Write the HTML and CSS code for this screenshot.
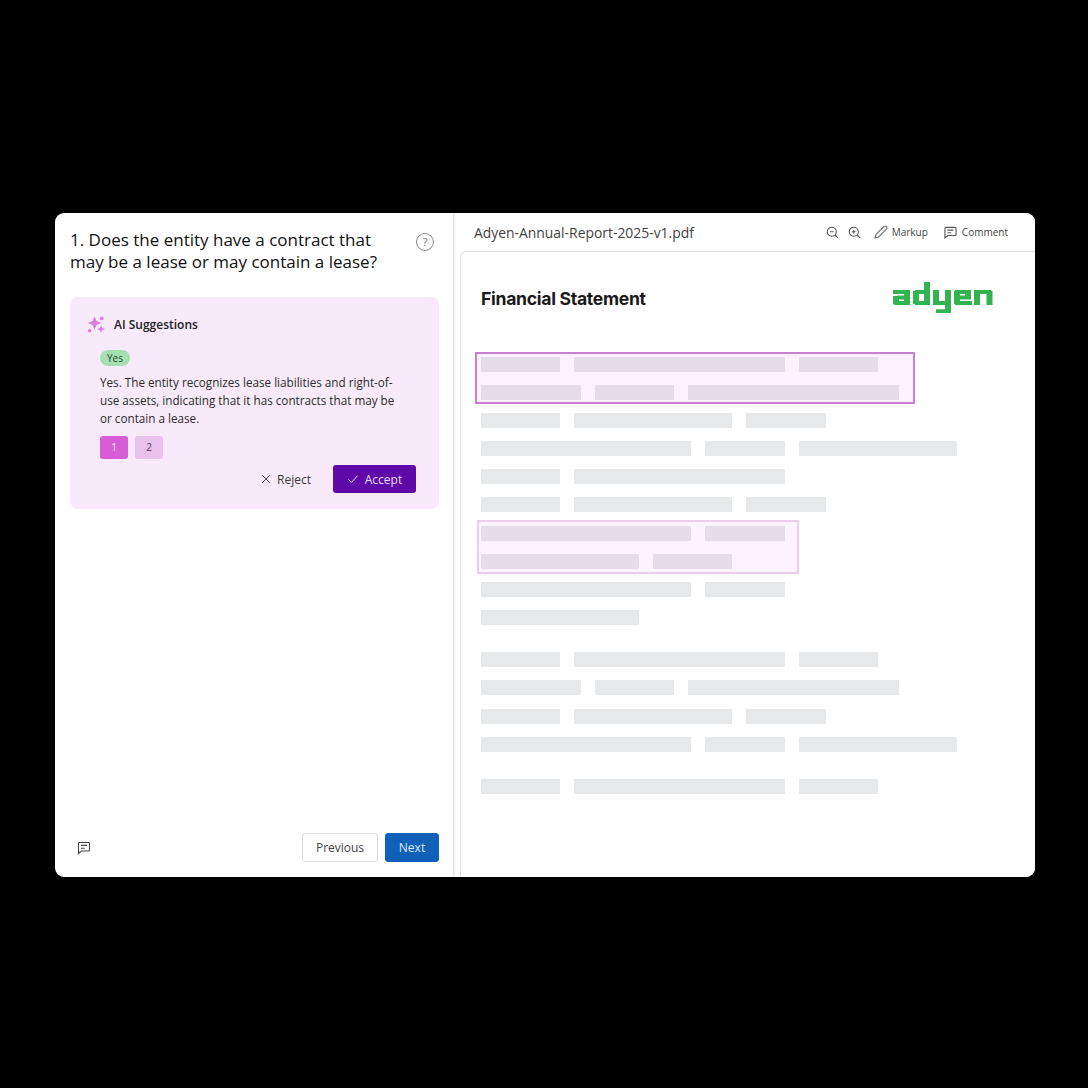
FILE: index.html
```html
<!DOCTYPE html>
<html lang="en">
<head>
<meta charset="utf-8">
<title>Adyen Annual Report review</title>
<link rel="stylesheet" href="styles.css">
</head>
<body>
<main class="window">
  <section class="left">
    <header class="question">
      <h1>1. Does the entity have a contract that may be a lease or may contain a lease?</h1>
      <span class="help">?</span>
    </header>
    <div class="suggest">
      <div class="suggest-head">
        <svg class="spark" viewBox="0 0 20 20" fill="#d77fdc">
          <path d="M8 1.5l2.1 4.9L15 8.5l-4.9 2.1L8 15.5l-2.1-4.9L1 8.5l4.9-2.1z"/>
          <path d="M14.8 10.8l1.2 2.8 3 1.2-3 1.2-1.2 2.8-1.2-2.8-3-1.2 3-1.2z"/>
          <rect x="13.8" y="1.8" width="3.6" height="3.6" rx="1.2"/>
          <circle cx="2.8" cy="16.6" r="1.9"/>
        </svg>
        <span>AI Suggestions</span>
      </div>
      <div class="body">
        <span class="tag">Yes</span>
        <p>Yes. The entity recognizes lease liabilities and right-of-use assets, indicating that it has contracts that may be or contain a lease.</p>
        <div class="refs"><span class="ref on">1</span><span class="ref">2</span></div>
      </div>
      <div class="actions">
        <button class="reject"><svg viewBox="0 0 12 12"><path d="M1.5 1.5l9 9M10.5 1.5l-9 9"/></svg>Reject</button>
        <button class="accept"><svg viewBox="0 0 14 12"><path d="M1.5 6.5l3.6 3.6L12.5 2"/></svg>Accept</button>
      </div>
    </div>
    <footer class="foot">
      <svg class="foot-icon" viewBox="0 0 14 14"><path d="M2.6 1.5h8.8a1.1 1.1 0 0 1 1.1 1.1v6.3a1.1 1.1 0 0 1-1.1 1.1H4.4L1.5 12.6V2.6a1.1 1.1 0 0 1 1.1-1.1zM4 4.4h6M4 7.2h3.6"/></svg>
      <div class="nav">
        <button class="prev">Previous</button>
        <button class="next">Next</button>
      </div>
    </footer>
  </section>
  <section class="right">
    <header class="toolbar">
      <span class="file">Adyen-Annual-Report-2025-v1.pdf</span>
      <div class="tools">
        <svg class="ic zoom-first" viewBox="0 0 14 14"><circle cx="6.2" cy="6.2" r="4.9"/><path d="M9.7 9.7l3.2 3.2M4.2 6.2h4"/></svg>
        <svg class="ic zoom-second" viewBox="0 0 14 14"><circle cx="6.2" cy="6.2" r="4.9"/><path d="M9.7 9.7l3.2 3.2M4.2 6.2h4M6.2 4.2v4"/></svg>
        <span class="tool markup"><svg class="ic pencil" viewBox="0 0 14 14"><path d="M1 13l.9-3.4L10 1.5a1.5 1.5 0 0 1 2.2 0l.3.3a1.5 1.5 0 0 1 0 2.2L4.4 12.1z"/></svg>Markup</span>
        <span class="tool comment"><svg class="ic" viewBox="0 0 14 14"><path d="M2.1 1.5h9.8a1.1 1.1 0 0 1 1.1 1.1v6.6a1.1 1.1 0 0 1-1.1 1.1H4L1 12.8V2.6a1.1 1.1 0 0 1 1.1-1.1zM3.8 4.4h6.4M3.8 7.2h3.8"/></svg>Comment</span>
      </div>
    </header>
    <article class="doc">
      <div class="doc-head">
        <h2>Financial Statement</h2>
        <svg class="logo" viewBox="0 0 100 31" role="img" aria-label="Adyen logo" fill="none" stroke="#33b350">
          <path class="logo-bars" d="M0 10H17M4 15.5H17M2 21H17M22 10H34M22 21H34M43 21H55M43 29.2H55M62 10H78M64 15.5H78M62 21H79M84 10H98"/>
          <path class="logo-stems" d="M14 8v15M3 14v8.5M34 0v23M23 9v13M43 8v15M55 8v23M64 9v13M75 9v8M84 8v15M96.5 9v14"/>
        </svg>
      </div>
      <div class="rows">
        <div class="group">
          <div class="mark strong"></div>
          <div class="row"><i class="w80"></i><i class="w211"></i><i class="w80"></i></div>
          <div class="row"><i class="w100"></i><i class="w80"></i><i class="w211"></i></div>
        </div>
        <div class="row"><i class="w80"></i><i class="w158"></i><i class="w80"></i></div>
        <div class="row"><i class="w211"></i><i class="w80"></i><i class="w158"></i></div>
        <div class="row"><i class="w80"></i><i class="w211"></i></div>
        <div class="row"><i class="w80"></i><i class="w158"></i><i class="w80"></i></div>
        <div class="group">
          <div class="mark soft"></div>
          <div class="row"><i class="w211"></i><i class="w80"></i></div>
          <div class="row"><i class="w158"></i><i class="w80"></i></div>
        </div>
        <div class="row"><i class="w211"></i><i class="w80"></i></div>
        <div class="row"><i class="w158"></i></div>
        <div class="row para"><i class="w80"></i><i class="w211"></i><i class="w80"></i></div>
        <div class="row"><i class="w100"></i><i class="w80"></i><i class="w211"></i></div>
        <div class="row"><i class="w80"></i><i class="w158"></i><i class="w80"></i></div>
        <div class="row"><i class="w211"></i><i class="w80"></i><i class="w158"></i></div>
        <div class="row para"><i class="w80"></i><i class="w211"></i><i class="w80"></i></div>
      </div>
    </article>
  </section>
</main>
</body>
</html>
```
FILE: styles.css
```css
* { box-sizing: border-box; }
html, body { margin: 0; height: 100%; }
body {
  background: #000;
  font-family: "Open Sans", "Noto Sans", sans-serif;
  color: #1f1f1f;
  padding: 213px 53px 211px 55px;
}
.window {
  display: flex;
  height: 664px;
  background: #fff;
  border-radius: 9px;
  overflow: hidden;
}
.left {
  width: 399px;
  flex: none;
  display: flex;
  flex-direction: column;
  padding: 16px 14px 15px 15px;
  border-right: 1px solid #e6e6e6;
}
.question { display: flex; justify-content: space-between; align-items: flex-start; }
h1 { margin: 0; width: 330px; font-size: 17px; line-height: 22px; font-weight: 500; color: #111; }
.help {
  width: 18px; height: 18px; margin: 4px 5px 0 0;
  border: 1.3px solid #8a8a8a; border-radius: 50%;
  font-size: 11px; line-height: 15px; text-align: center; color: #777;
}
.suggest {
  margin-top: 24px;
  height: 212px;
  background: #f8eafa;
  border-radius: 8px;
  padding: 16px 23px 15px 17px;
  display: flex;
  flex-direction: column;
}
.suggest-head { display: flex; align-items: center; gap: 8px; font-size: 12px; font-weight: 600; height: 22px; color: #222; }
.spark { width: 19px; height: 19px; }
.body { padding: 15px 0 0 13px; }
.tag {
  display: block; width: 30px; height: 16px; border-radius: 8px;
  background: #a6dfb2; color: #1d4a2a;
  font-size: 10px; font-weight: 500; line-height: 16px; text-align: center;
}
p { margin: 7px 0 0; width: 300px; font-size: 11.7px; line-height: 18px; color: #2b2b2b; }
.refs { display: flex; gap: 7px; margin-top: 9px; }
.ref {
  width: 28px; height: 23px; border-radius: 3px;
  background: #e9c1ec; color: #5a3a5c;
  font-size: 10px; line-height: 23px; text-align: center;
}
.ref.on { background: #d65cd8; color: #fbe4fb; }
.actions { display: flex; justify-content: flex-end; align-items: center; gap: 22px; margin-top: 6px; }
button { font-family: inherit; font-size: 12px; padding: 0; cursor: pointer; }
.reject, .accept { display: flex; align-items: center; justify-content: center; border: 0; background: none; }
.reject { gap: 6px; color: #3a3a3a; }
.reject svg { width: 10px; height: 10px; fill: none; stroke: #444; stroke-width: 1.2; }
.accept { gap: 6px; width: 83px; height: 28px; border-radius: 3px; background: #5f0aa8; color: #eadcf5; }
.accept svg { width: 12px; height: 10px; fill: none; stroke: #eadcf5; stroke-width: 1.2; }
.foot { margin-top: auto; display: flex; justify-content: space-between; align-items: center; }
.foot-icon { width: 14px; height: 14px; margin-left: 7px; fill: none; stroke: #444; stroke-width: 1.1; }
.nav { display: flex; gap: 7px; }
.prev, .next { height: 29px; border-radius: 3px; line-height: 27px; }
.prev { width: 76px; background: #fff; border: 1px solid #dcdcdc; color: #444; }
.next { width: 54px; background: #1160b7; border: 1px solid #1160b7; color: #dfeaf7; }
.right { flex: 1; min-width: 0; display: flex; flex-direction: column; padding-left: 5px; background: #fff; border-left: 1px solid #f1f1f1; }
.toolbar { height: 38px; flex: none; display: flex; justify-content: space-between; align-items: center; padding: 0 27px 0 14px; }
.file { font-size: 13.9px; color: #3f3f3f; font-weight: 500; }
.tools { display: flex; align-items: center; font-size: 10px; color: #444; }
.ic { width: 13px; height: 13px; fill: none; stroke: #555; stroke-width: 1.2; flex: none; }
.ic.pencil { width: 14px; height: 14px; stroke: #777; }
.zoom-second { margin-left: 9px; }
.tool { display: flex; align-items: center; gap: 5px; }
.markup { margin-left: 13px; gap: 4px; }
.comment { margin-left: 16px; }
.doc { flex: 1; border: 1px solid #e2e2e2; border-right: 0; border-bottom: 0; border-top-left-radius: 6px; padding: 0 0 0 20px; }
.doc-head { height: 104.5px; display: flex; justify-content: space-between; align-items: flex-start; padding: 34px 42px 0 0; }
h2 { margin: 0; font-family: Inter, "Liberation Sans", sans-serif; font-size: 17.6px; line-height: 26px; font-weight: 700; letter-spacing: -.3px; color: #1a1a1a; }
.logo { width: 100px; height: 31px; margin-top: -4px; }
.logo-bars { stroke-width: 3.8; }
.logo-stems { stroke-width: 6; }
.rows { display: flex; flex-direction: column; gap: 13.2px; }
.group { position: relative; display: flex; flex-direction: column; gap: 13.2px; }
.mark { position: absolute; }
.mark.strong { left: -6px; top: -5px; width: 440px; height: 52px; border: 2px solid #c97fd2; background: rgba(203, 90, 240, .08); }
.mark.soft { left: -4px; top: -6px; width: 322px; height: 54px; border: 2px solid #eccdf0; background: rgba(215, 100, 240, .08); }
.row { display: flex; gap: 14px; height: 15px; }
.row.para { margin-top: 13.8px; }
.row i { display: block; height: 15px; background: #e7e8e9; }
.w80 { width: 79.4px; }
.w100 { width: 100px; }
.w158 { width: 158px; }
.w211 { width: 210.4px; }
```
